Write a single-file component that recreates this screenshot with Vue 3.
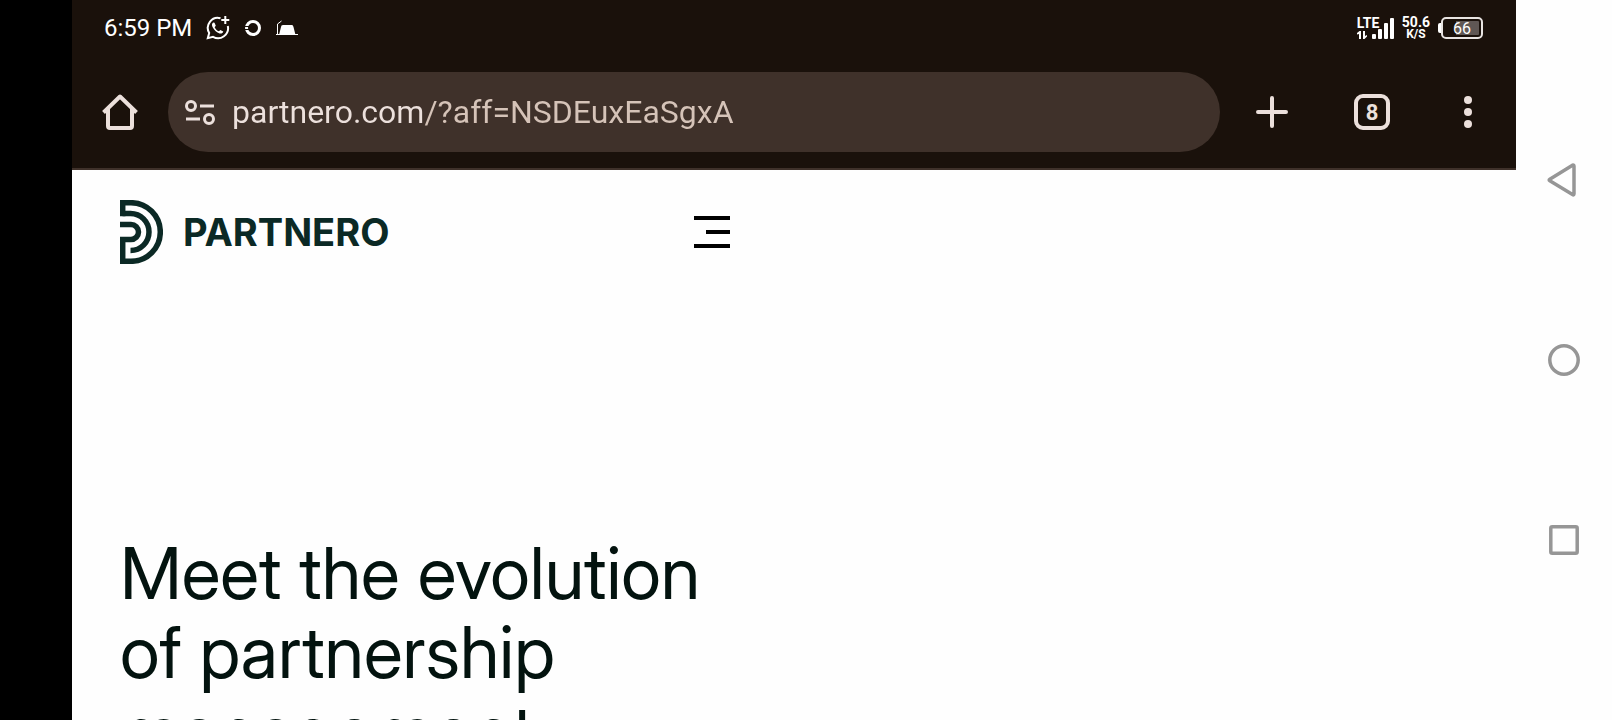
<script setup>
import { ref } from 'vue'

const address = ref('partnero.com/?aff=NSDEuxEaSgxA')
const tabCount = 8
</script>

<template>
  <div class="device">
    <div class="cutout"></div>

    <div class="screen">
      <div class="chrome">
        <div class="status">
          <div class="status-left">
            <span class="clock">6:59 PM</span>
            <svg width="24" height="24" viewBox="0 0 24 24" fill="none" stroke="#fff" stroke-width="2">
              <path d="M14.5 2.3A10 10 0 0 0 3.2 17L1.8 22.2 7 20.8A10 10 0 0 0 21.8 10" />
              <path d="M19.3 0v8M15.3 4h8" />
              <path d="M7.2 6.500c-1.500 1-1.600 2.800-.4 5 1.600 3 4 5 6.700 5.900 1.700.5 3.300-.2 3.800-1.900l-2.900-1.600-1.500 1.400c-2-.8-3.400-2.200-4.300-4.100l1.200-1.500-1.300-3z" fill="#fff" stroke="none" />
            </svg>
            <svg width="18" height="18" viewBox="0 0 18 18" fill="none" stroke="#fff">
              <circle cx="9" cy="9" r="6.500" stroke-width="3" />
              <path d="M0 7.500h5M0 10.500h5" stroke="#1a110b" stroke-width="1" />
            </svg>
            <svg width="22" height="16" viewBox="0 0 22 16">
              <path d="M5 7q0-2 2-2h9q1 0 1.500 2l2 8H3z" fill="#fff" />
              <path d="M0 14.500h22M1.500 14V4l4-3" fill="none" stroke="#fff" stroke-width="1" />
            </svg>
          </div>
          <div class="status-right">
            <div class="lte">
              <span class="lte-name">LTE</span>
              <svg width="37" height="22" viewBox="0 0 37 22" fill="#fff">
                <path d="M2 22v-5L0 17.500V16l2.500-2H4v8zM6 14h2v5l2-1v1.500L7.500 22H6z" />
                <rect x="15" y="17" width="4" height="5" rx="1" />
                <rect x="21" y="12" width="4" height="10" rx="1" />
                <rect x="27" y="6" width="4" height="16" rx="1" />
                <rect x="33" y="1" width="4" height="21" rx="1" />
              </svg>
            </div>
            <div class="speed">
              <span>50.6</span>
              <small>K/S</small>
            </div>
            <div class="battery">
              <span class="battery-tip"></span>
              <span class="battery-body">66</span>
            </div>
          </div>
        </div>

        <div class="toolbar">
          <button class="icon-button" aria-label="Home">
            <svg width="36" height="36" viewBox="0 0 36 36" fill="none" stroke="#ece0dc" stroke-width="4">
              <path d="M1.500 18.500 18 2.500l16.500 16" stroke-linejoin="round" />
              <path d="M6 15v17q0 2 2 2h20q2 0 2-2V15" />
            </svg>
          </button>
          <form class="omnibox" @submit.prevent>
            <button class="site-info" type="button" aria-label="Site information">
              <svg width="32" height="26" viewBox="0 0 32 26" fill="none" stroke="#ece0dc" stroke-width="3">
                <circle cx="7" cy="7" r="4.500" />
                <circle cx="25" cy="20" r="4.500" />
                <path d="M16 7h14M2 20h14" />
              </svg>
            </button>
            <input v-model="address" class="address" type="text" aria-label="Address" spellcheck="false" />
          </form>
          <button class="icon-button new-tab" aria-label="New tab">
            <svg width="32" height="32" viewBox="0 0 32 32" stroke="#ece0dc" stroke-width="4" stroke-linecap="round">
              <path d="M2 16h28M16 2v28" />
            </svg>
          </button>
          <button class="icon-button tabs" aria-label="Switch tabs"><span class="tab-count">{{ tabCount }}</span></button>
          <button class="icon-button" aria-label="Menu">
            <svg width="8" height="32" viewBox="0 0 8 32" fill="#ece0dc">
              <circle cx="4" cy="4" r="4" />
              <circle cx="4" cy="16" r="4" />
              <circle cx="4" cy="28" r="4" />
            </svg>
          </button>
        </div>
      </div>

      <main class="page">
        <header class="site-header">
          <a class="brand" href="#">
            <svg width="43" height="64" viewBox="0 0 43 64" fill="none" stroke="#0b2925" stroke-width="5.500">
              <path d="M2.500 13.500H10.500A18.500 18.500 0 0 1 10.500 50.500" />
              <path d="M0 13.500H2.700V2.700H11A29.300 29.300 0 0 1 11 61.300H2.700V39.500H11A7.500 7.500 0 0 0 11 24.500H0" />
            </svg>
            <span class="brand-name">PARTNERO</span>
          </a>
          <button class="menu" aria-label="Open menu"><i></i><i></i><i></i></button>
        </header>
        <h1>Meet the evolution<br />of partnership<br />management</h1>
      </main>
    </div>

    <nav class="system-nav" aria-label="System navigation">
      <button aria-label="Back">
        <svg width="36" height="36" viewBox="0 0 36 36" fill="none" stroke="#969696" stroke-width="3.500" stroke-linejoin="round">
          <path d="M3.800 17.200 26.500 3.200Q28 2.500 28 4.300V31.700Q28 33.500 26.500 32.600L3.800 18.800Q2.500 18 3.800 17.200z" />
        </svg>
      </button>
      <button aria-label="Home screen">
        <svg width="32" height="32" viewBox="0 0 32 32" fill="none" stroke="#969696" stroke-width="3.500">
          <circle cx="16" cy="16" r="14.200" />
        </svg>
      </button>
      <button aria-label="Recent apps">
        <svg width="30" height="30" viewBox="0 0 30 30" fill="none" stroke="#969696" stroke-width="3.500">
          <rect x="1.800" y="1.800" width="26.400" height="26.400" rx="1.500" />
        </svg>
      </button>
    </nav>
  </div>
</template>

<style>
body {
  margin: 0;
  overflow: hidden;
}
</style>

<style scoped>
* {
  box-sizing: border-box;
}

svg {
  display: block;
  flex: none;
}

button {
  padding: 0;
  border: 0;
  background: none;
  font: inherit;
}

.device {
  display: grid;
  grid-template-columns: 72px 1fr 96px;
  height: 100vh;
  overflow: hidden;
  background: #fff;
  font-family: Roboto, "Liberation Sans", sans-serif;
}

.cutout {
  background: #000;
}

.screen {
  display: flex;
  flex-direction: column;
  min-width: 0;
  overflow: hidden;
}

.chrome {
  flex: none;
  border-bottom: 2px solid #3f312a;
  background: #1a110b;
  color: #fff;
}

.status {
  display: flex;
  align-items: center;
  justify-content: space-between;
  height: 56px;
  padding: 0 33px 0 32px;
}

.status-left,
.status-right {
  display: flex;
  align-items: center;
}

.status-left {
  gap: 14px;
}

.clock {
  font-size: 24px;
  line-height: 28px;
}

.status-right {
  gap: 8px;
}

.lte {
  display: grid;
}

.lte > * {
  grid-area: 1 / 1;
}

.lte-name {
  font-size: 14px;
  font-weight: 700;
  line-height: 12px;
}

.speed {
  display: flex;
  flex-direction: column;
  align-items: center;
  font-size: 14px;
  font-weight: 700;
  line-height: 12px;
}

.speed small {
  font-size: 12px;
  line-height: 12px;
}

.battery {
  display: flex;
  align-items: center;
}

.battery-tip {
  width: 3px;
  height: 10px;
  border-radius: 2px 0 0 2px;
  background: #fff;
}

.battery-body {
  width: 42px;
  height: 22px;
  padding: 2px;
  border: 2px solid #e8e4e2;
  border-radius: 5px;
  background: linear-gradient(90deg, transparent 11px, #5f5754 11px) content-box;
  font-size: 16px;
  line-height: 16px;
  text-align: center;
}

.toolbar {
  display: flex;
  align-items: center;
  padding: 16px 44px 16px 30px;
}

.icon-button {
  display: flex;
  align-items: center;
  justify-content: center;
}

.omnibox {
  display: flex;
  flex: 1;
  align-items: center;
  gap: 16px;
  min-width: 0;
  height: 80px;
  margin: 0 36px 0 30px;
  padding: 0 32px 0 16px;
  border-radius: 40px;
  background: #3f312a;
}

.address {
  flex: 1;
  min-width: 0;
  height: 48px;
  padding: 0;
  border: 0;
  outline: 0;
  background: linear-gradient(90deg, #ece0dc 191px, #d5c3b8 191px);
  background-clip: text;
  -webkit-background-clip: text;
  color: transparent;
  caret-color: #ece0dc;
  font: 32px/48px Roboto, "Liberation Sans", sans-serif;
}

.tabs {
  margin: 0 74px 0 66px;
}

.tab-count {
  width: 36px;
  height: 36px;
  border: 4px solid #ece0dc;
  border-radius: 9px;
  color: #ece0dc;
  font-size: 22px;
  font-weight: 700;
  line-height: 29px;
  text-align: center;
}

.page {
  flex: 1;
  min-height: 0;
  overflow: hidden;
  background: #fefefe;
}

.site-header {
  display: flex;
  align-items: center;
  justify-content: space-between;
  max-width: 720px;
  padding: 30px 62px 0 48px;
}

.brand {
  display: flex;
  align-items: center;
  gap: 20px;
  color: #0b2925;
  text-decoration: none;
}

.brand-name {
  font: 700 38px/38px Inter, sans-serif;
}

.menu {
  display: flex;
  flex-direction: column;
  align-items: flex-end;
  gap: 10px;
}

.menu i {
  width: 36px;
  height: 4px;
  background: #000;
}

.menu i:nth-child(2) {
  width: 24px;
}

h1 {
  margin: 269px 48px 0;
  color: #03130f;
  font: 400 72px/79px "Inter Display", Inter, sans-serif;
  font-variation-settings: "opsz" 32;
}

.system-nav {
  display: flex;
  flex-direction: column;
  padding: 90px 0;
  background: #fefefe;
}

.system-nav button {
  display: flex;
  flex: 1;
  align-items: center;
  justify-content: center;
}
</style>
